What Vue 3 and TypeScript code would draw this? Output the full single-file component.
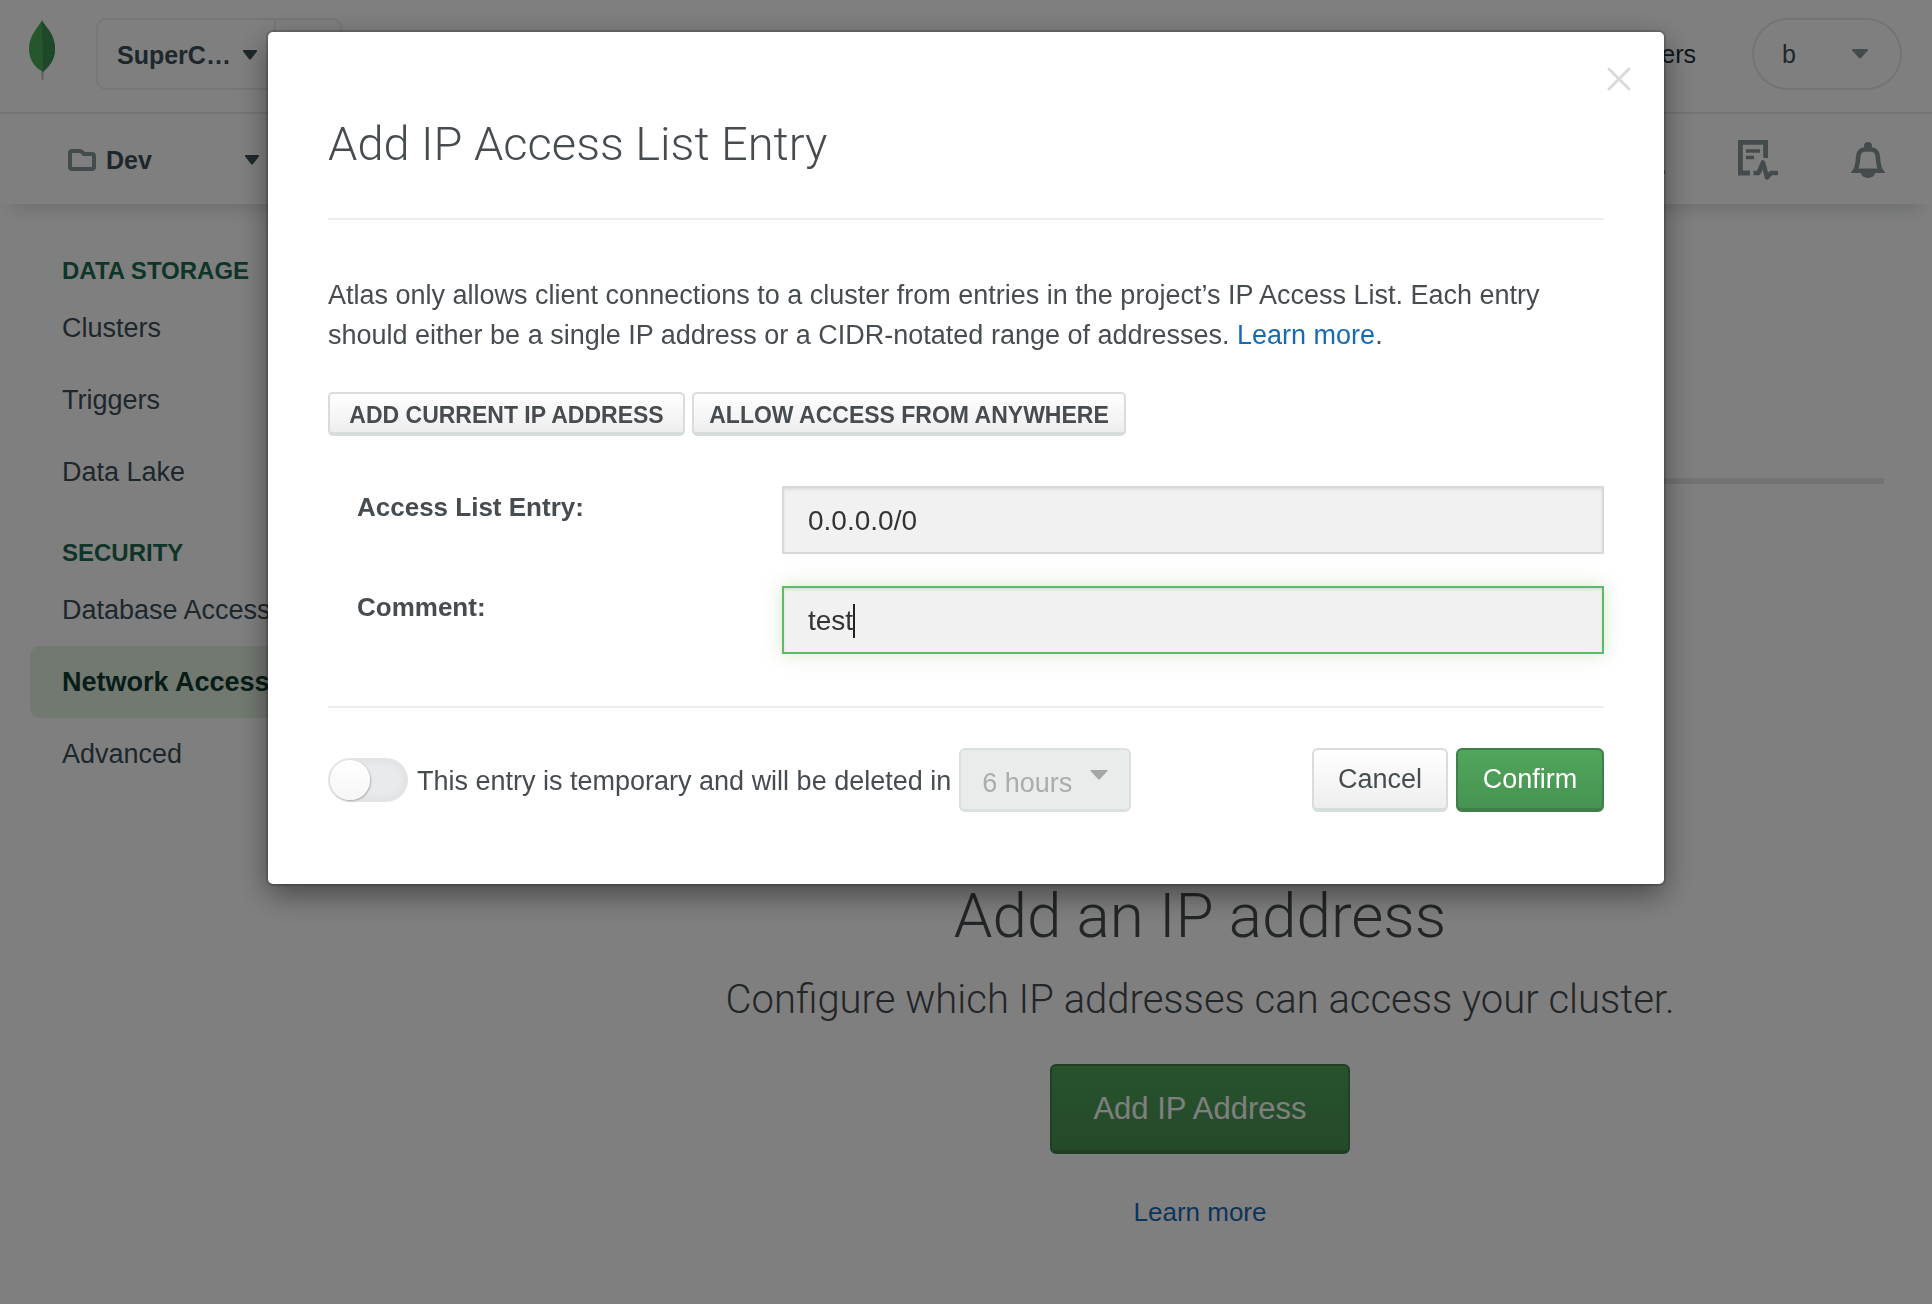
<script setup lang="ts">
import { onMounted, ref } from 'vue'

interface NavGroup {
  title: string
  items: string[]
}

const groups: NavGroup[] = [
  { title: 'DATA STORAGE', items: ['Clusters', 'Triggers', 'Data Lake'] },
  { title: 'SECURITY', items: ['Database Access', 'Network Access', 'Advanced'] },
]
const current = 'Network Access'

const entry = ref('0.0.0.0/0')
const comment = ref('test')
const temporary = ref(false)
const duration = ref('6 hours')
const commentInput = ref<HTMLInputElement | null>(null)

onMounted(() => {
  const el = commentInput.value
  if (!el) return
  el.focus()
  el.setSelectionRange(comment.value.length, comment.value.length)
})
</script>

<template>
  <div class="page">
    <header class="top-bar">
      <svg class="leaf" viewBox="0 0 26 60" aria-hidden="true">
        <path d="M12 47h3l-.8 13h-1.4z" fill="#b8c4c2" />
        <path d="M13 0C14 5 26 12 26 29c0 12-7 18-12 23C7 48 0 41 0 29 0 15 9 8 13 0z" fill="#4cac58" />
        <path d="M13 0C14 5 26 12 26 29c0 12-7 18-12 23z" fill="#3e9054" />
      </svg>
      <div class="org">
        <button class="org-name" type="button">
          SuperC…
          <svg class="caret" viewBox="0 0 14 10" aria-hidden="true"><path d="M1 0h12q2 0 .5 2L8 9q-1 1-2 0L.5 2Q-1 0 1 0z" /></svg>
        </button>
        <button class="org-settings" type="button" aria-label="Organization settings"></button>
      </div>
      <nav class="top-links">
        <a href="#">All Clusters</a>
        <button class="user" type="button">
          b
          <svg class="caret-lg" viewBox="0 0 16 10" aria-hidden="true"><path d="M1 0h14q2 0 .5 2L9 9q-1 1-2 0L.5 2Q-1 0 1 0z" /></svg>
        </button>
      </nav>
    </header>

    <div class="project-bar">
      <button class="project" type="button">
        <svg class="folder" viewBox="0 0 28 22" aria-hidden="true">
          <path d="M2 4q0-2 2-2h8q1 0 2 1l2 2h8q2 0 2 2v11q0 2-2 2H4q-2 0-2-2z" fill="none" stroke="#89979b" stroke-width="4" />
        </svg>
        <span>Dev</span>
        <svg class="caret" viewBox="0 0 14 10" aria-hidden="true"><path d="M1 0h12q2 0 .5 2L8 9q-1 1-2 0L.5 2Q-1 0 1 0z" /></svg>
      </button>
      <div class="tools">
        <button type="button" aria-label="Invite">
          <svg width="40" height="40" viewBox="0 0 40 40" fill="none" stroke="#89979b" stroke-width="4">
            <circle cx="20" cy="11" r="8" /><path d="M2 32q18-18 36 0H2z" />
          </svg>
        </button>
        <button type="button" aria-label="Activity feed">
          <svg width="40" height="40" viewBox="0 0 40 40" fill="none" stroke="#89979b">
            <path d="M12 33H2.4V2.4h25.2V18" stroke-width="4.8" />
            <path d="M8 11h14M8 17.5h8" stroke-width="3.6" />
            <path d="M15.5 33h5L25 22.5l4 15 4-4.5h7" stroke-width="4.6" stroke-linejoin="round" />
          </svg>
        </button>
        <button type="button" aria-label="Alerts">
          <svg width="34" height="37" viewBox="0 0 34 37">
            <circle cx="17" cy="4" r="4" fill="#89979b" />
            <path d="M4 28.7C6.5 25 6.800 20 7.200 15c.4-5 2.800-7.500 6.800-7.500h6c4 0 6.400 2.500 6.800 7.500.4 5 .7 10 3.200 13.700z" fill="none" stroke="#89979b" stroke-width="4.600" />
            <path d="M10 31a7 5 0 0 0 14 0z" fill="#89979b" />
          </svg>
        </button>
      </div>
    </div>

    <div class="body">
      <aside class="sidebar">
        <section v-for="group in groups" :key="group.title" class="group">
          <h2>{{ group.title }}</h2>
          <a v-for="item in group.items" :key="item" href="#" :class="{ active: item === current }">{{ item }}</a>
        </section>
      </aside>
      <main class="main">
        <hr class="tab-line" />
        <h1>Add an IP address</h1>
        <p>Configure which IP addresses can access your cluster.</p>
        <button class="btn primary large" type="button">Add IP Address</button>
        <a href="#">Learn more</a>
      </main>
    </div>

    <div class="overlay">
      <form class="modal" role="dialog" aria-labelledby="dialog-title" @submit.prevent>
        <button class="close" type="button" aria-label="Close">
          <svg width="24" height="24" viewBox="0 0 24 24"><path d="M2 2l20 20M22 2L2 22" stroke="#d8dbdc" stroke-width="3" stroke-linecap="round" /></svg>
        </button>
        <h2 id="dialog-title">Add IP Access List Entry</h2>
        <p class="intro">
          Atlas only allows client connections to a cluster from entries in the project’s IP Access List. Each entry
          should either be a single IP address or a CIDR-notated range of addresses. <a href="#">Learn more</a>.
        </p>
        <div class="quick">
          <button class="btn small" type="button">ADD CURRENT IP ADDRESS</button>
          <button class="btn small" type="button">ALLOW ACCESS FROM ANYWHERE</button>
        </div>
        <div class="field">
          <label for="entry">Access List Entry:</label>
          <input id="entry" v-model="entry" type="text" />
        </div>
        <div class="field">
          <label for="comment">Comment:</label>
          <div class="focused">
            <input id="comment" ref="commentInput" v-model="comment" type="text" />
            <span class="cursor" aria-hidden="true"><span class="typed">{{ comment }}</span></span>
          </div>
        </div>
        <footer class="actions">
          <input id="temporary" v-model="temporary" class="toggle" type="checkbox" />
          <label for="temporary">This entry is temporary and will be deleted in</label>
          <div class="select">
            <select v-model="duration" :disabled="!temporary" aria-label="Delete after">
              <option>6 hours</option>
              <option>1 day</option>
              <option>1 week</option>
            </select>
            <svg class="select-caret" viewBox="0 0 18 10" aria-hidden="true"><path d="M1 0h16q1 0 .5 1L10 9q-1 1-2 0L.5 1Q0 0 1 0z" /></svg>
          </div>
          <button class="btn cancel" type="button">Cancel</button>
          <button class="btn primary confirm" type="submit">Confirm</button>
        </footer>
      </form>
    </div>
  </div>
</template>

<style>
body {
  margin: 0;
  background: #fff;
}
</style>

<style scoped>
.page {
  min-height: 100vh;
  font-family: "Liberation Sans", Arial, sans-serif;
  font-size: 27px;
  color: #464c4f;
  background: #fff;
}

.page *,
.page {
  box-sizing: border-box;
}

button,
input,
select {
  font: inherit;
  color: inherit;
}

button {
  margin: 0;
  padding: 0;
  border: 0;
  background: none;
}

a {
  text-decoration: none;
  color: #1a69b5;
}

.top-bar {
  display: flex;
  align-items: center;
  height: 114px;
  padding: 0 30px 4px 29px;
  border-bottom: 2px solid #e7eaea;
  font-size: 25px;
}

.leaf {
  width: 26px;
  height: 60px;
  margin-bottom: 8px;
}

.org {
  display: flex;
  width: 246px;
  height: 72px;
  margin-left: 41px;
  border: 2px solid #eceeee;
  border-radius: 10px;
}

.org-name {
  display: flex;
  align-items: center;
  justify-content: space-between;
  width: 178px;
  padding: 2px 17px 0 19px;
  border-right: 2px solid #eceeee;
  font-weight: 700;
  color: #3d4f58;
}

.org-settings {
  flex: 1;
}

.caret {
  width: 14px;
  height: 10px;
  fill: #3d4f58;
}

.caret-lg {
  width: 16px;
  height: 10px;
  fill: #89979b;
}

.top-links {
  display: flex;
  align-items: center;
  gap: 56px;
  margin-left: auto;
}

.top-links a {
  color: #21313c;
}

.user {
  display: flex;
  align-items: center;
  justify-content: space-between;
  width: 150px;
  height: 72px;
  padding: 0 32px 0 28px;
  border: 2px solid #e7eaea;
  border-radius: 36px;
  color: #3d4f58;
}

.project-bar {
  display: flex;
  align-items: center;
  justify-content: space-between;
  height: 90px;
  padding: 2px 47px 0 68px;
  box-shadow: 0 14px 20px -12px rgba(30, 50, 70, 0.22);
}

.project {
  display: flex;
  align-items: center;
  width: 191px;
  font-size: 25px;
  font-weight: 700;
  color: #3d4f58;
}

.project .caret {
  margin-left: auto;
}

.folder {
  width: 28px;
  height: 22px;
  margin-right: 10px;
}

.tools {
  display: flex;
  align-items: center;
  gap: 73px;
}

.tools button,
.tools svg {
  display: block;
}

.body {
  display: flex;
}

.sidebar {
  flex: none;
  width: 468px;
  padding: 49px 30px 0;
}

.group {
  margin-bottom: 27px;
}

.group h2 {
  margin: 0 0 3px;
  padding-left: 32px;
  font-size: 24px;
  line-height: 36px;
  color: #1f6b52;
}

.group a {
  display: block;
  height: 72px;
  padding-left: 32px;
  border-radius: 10px;
  line-height: 72px;
  color: #3d4f58;
}

.group a.active {
  background: #e4f2e2;
  font-weight: 700;
  color: #0f3b30;
}

.main {
  display: flex;
  flex: 1;
  flex-direction: column;
  align-items: center;
  padding: 274px 48px 0;
}

.tab-line {
  width: 100%;
  height: 6px;
  margin: 0 0 396px;
  border: 0;
  background: #e7e7e7;
}

.main h1 {
  margin: 0;
  font-family: Roboto, "Liberation Sans", sans-serif;
  font-size: 62px;
  font-weight: 300;
  line-height: 72px;
}

.main p {
  margin: 20px 0 36px;
  font-family: Roboto, "Liberation Sans", sans-serif;
  font-size: 40px;
  font-weight: 300;
  line-height: 56px;
}

.main > a {
  margin-top: 42px;
  font-size: 26px;
  line-height: 32px;
}

.btn {
  border: 2px solid #d8dcdc;
  border-bottom-width: 4px;
  border-radius: 6px;
  background: linear-gradient(#fff, #eee);
}

.btn.primary {
  border-color: #3f804a;
  background: linear-gradient(#50a65b, #479353);
  color: #fff;
}

.btn.small {
  height: 44px;
  padding-top: 4px;
  border-radius: 5px;
  font-size: 23px;
  font-weight: 700;
  line-height: 34px;
}

.btn.large {
  width: 300px;
  height: 90px;
  padding-top: 2px;
  font-size: 31px;
}

.overlay {
  position: fixed;
  inset: 0;
  padding: 32px 24px;
  overflow: auto;
  background: rgba(0, 0, 0, 0.5);
}

.modal {
  position: relative;
  width: 100%;
  max-width: 1396px;
  margin: 0 auto;
  padding: 78px 60px 72px;
  border-radius: 5px;
  background: #fff;
  box-shadow: 0 0 0 2px rgba(0, 0, 0, 0.16), 0 10px 30px rgba(0, 0, 0, 0.45);
}

.close {
  position: absolute;
  top: 35px;
  right: 33px;
}

.close svg {
  display: block;
}

.modal h2 {
  margin: 0;
  padding-bottom: 40px;
  border-bottom: 2px solid #eee;
  font-family: Roboto, "Liberation Sans", sans-serif;
  font-size: 47px;
  font-weight: 300;
  line-height: 68px;
}

.intro {
  margin: 55px 0 37px;
  line-height: 40px;
}

.quick {
  display: grid;
  grid-template-columns: 357px 434px;
  gap: 7px;
  margin-bottom: 50px;
}

.field {
  display: grid;
  grid-template-columns: 454px 1fr;
  margin-bottom: 32px;
}

.field label {
  padding-left: 29px;
  font-size: 26px;
  font-weight: 700;
  line-height: 42px;
}

.field input {
  display: block;
  width: 100%;
  height: 68px;
  padding: 2px 24px 0;
  border: 2px solid #d9d9d9;
  border-radius: 0;
  outline: none;
  background: #f1f1f1;
  box-shadow: inset 0 2px 3px rgba(0, 0, 0, 0.08);
  font-size: 28px;
  color: #333;
  caret-color: transparent;
}

.focused {
  position: relative;
}

.focused input {
  border-color: #5abb69;
  box-shadow: inset 0 2px 3px rgba(0, 0, 0, 0.08), 0 0 18px rgba(90, 160, 50, 0.25);
}

/* Steady text cursor placed right after the typed comment */
.cursor {
  position: absolute;
  top: 18px;
  left: 26px;
  height: 34px;
  border-right: 2px solid #222;
  font-size: 28px;
  pointer-events: none;
}

.typed {
  visibility: hidden;
}

.actions {
  display: flex;
  align-items: center;
  margin-top: 52px;
  padding-top: 40px;
  border-top: 2px solid #eee;
}

.actions label {
  padding-top: 2px;
}

.toggle {
  appearance: none;
  flex: none;
  width: 80px;
  height: 44px;
  margin: 0 9px 0 0;
  border: 2px solid #e3e4e6;
  border-radius: 22px;
  background: #e9eaec;
  box-shadow: inset 0 0 10px rgba(0, 0, 0, 0.06);
}

.toggle::before {
  content: "";
  display: block;
  width: 40px;
  height: 40px;
  border-radius: 20px;
  background: linear-gradient(#fff, #f6f6f6);
  box-shadow: 1px 1px 2px rgba(0, 0, 0, 0.25);
}

.toggle:checked::before {
  margin-left: auto;
}

.select {
  position: relative;
  margin: 0 auto 0 8px;
}

.select select {
  appearance: none;
  display: block;
  width: 172px;
  height: 64px;
  padding: 6px 21px 0;
  border: 2px solid #dce1e0;
  border-bottom-width: 3px;
  border-radius: 6px;
  background: #e8edeb;
  opacity: 1;
  color: #a9adac;
}

.select-caret {
  position: absolute;
  top: 22px;
  right: 23px;
  width: 18px;
  height: 10px;
  fill: #a3a8a7;
  pointer-events: none;
}

.btn.cancel,
.btn.confirm {
  width: 136px;
  height: 64px;
}

.btn.confirm {
  width: 148px;
  margin-left: 8px;
}
</style>
